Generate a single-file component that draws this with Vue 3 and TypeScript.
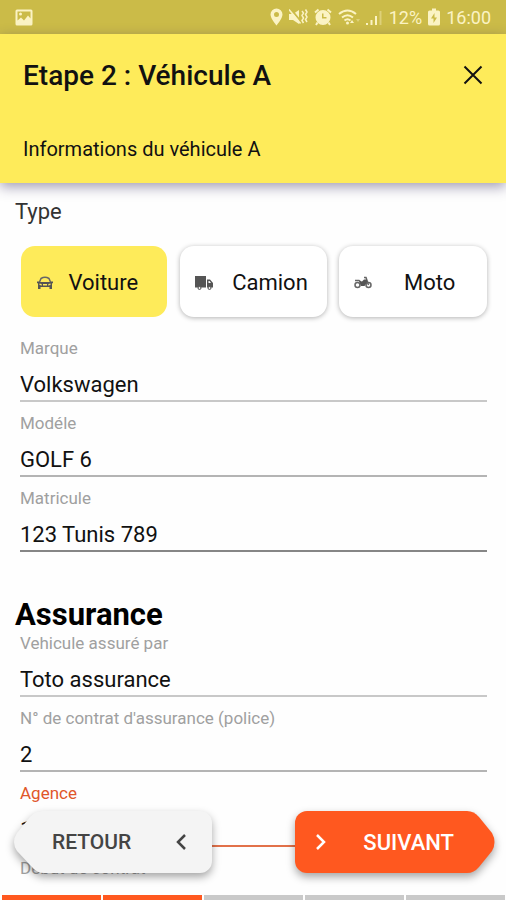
<script setup lang="ts">
import { ref } from 'vue'

interface Field {
  id: string
  label: string
  value: string
  tone: 'light' | 'mid' | 'dark' | 'active'
}

type Vehicle = 'Voiture' | 'Camion' | 'Moto'

const vehicles: Vehicle[] = ['Voiture', 'Camion', 'Moto']
const selected = ref<Vehicle>('Voiture')

const vehicleFields = ref<Field[]>([
  { id: 'marque', label: 'Marque', value: 'Volkswagen', tone: 'light' },
  { id: 'modele', label: 'Modéle', value: 'GOLF 6', tone: 'mid' },
  { id: 'matricule', label: 'Matricule', value: '123 Tunis 789', tone: 'dark' },
])

const insuranceFields = ref<Field[]>([
  { id: 'assureur', label: 'Vehicule assuré par', value: 'Toto assurance', tone: 'light' },
  { id: 'contrat', label: "N° de contrat d'assurance (police)", value: '2', tone: 'mid' },
  { id: 'agence', label: 'Agence', value: '1', tone: 'active' },
  { id: 'debut', label: 'Début de contrat', value: '', tone: 'light' },
])

const steps = 5
const currentStep = 2
</script>

<template>
  <div class="screen">
    <div class="status">
      <svg viewBox="0 0 18 17" width="18" height="17">
        <path fill-rule="evenodd" d="M2 .5h14A1.500 1.500 0 0 1 17.500 2v13a1.500 1.500 0 0 1-1.500 1.500H2A1.500 1.500 0 0 1 .5 15V2A1.500 1.500 0 0 1 2 .5zM2.500 2.500v9l3.500-3 3 3 4-5 2.500 3v-7z" />
        <circle cx="5.500" cy="5" r="1.500" />
      </svg>
      <div class="status-right">
        <svg viewBox="0 0 13 18" width="13" height="18">
          <path fill-rule="evenodd" d="M6.500 .5a6 6 0 0 0-6 6c0 4 6 11 6 11s6-7 6-11a6 6 0 0 0-6-6zm0 3.500a2.500 2.500 0 1 1 0 5 2.500 2.500 0 0 1 0-5z" />
        </svg>
        <svg viewBox="0 0 19 18" width="19" height="18">
          <path d="M0 6h4l6-4v14l-6-4H0z" />
          <path class="cut" d="M1 0l12 15" />
          <path class="line" d="M0 1.500l11.500 14M13 3l1.500 2-1.500 2.500 1.500 2.500-1.500 2.500 1.500 2.500M16.500 1.500l1.500 2.500-1.500 2.500 1.500 2.500-1.500 2.500 1.500 2.500" />
        </svg>
        <svg viewBox="0 0 18 18" width="18" height="18">
          <path class="thick" d="M1 4.500L4.500 1.500M17 4.500L13.500 1.500M3.500 14.500L2 17M14.500 14.500L16 17" />
          <path fill-rule="evenodd" d="M9 2a7.500 7.500 0 1 0 0 15A7.500 7.500 0 0 0 9 2zm-1 3.500h1.500V9h3v1.500H8z" />
        </svg>
        <svg viewBox="0 0 22 18" width="22" height="18">
          <path class="thick" d="M1 6Q9.500-1 18 6M4 9.500q5.500-4.500 11 0M6.500 12.500q3-2.500 6 0" />
          <circle cx="9.500" cy="15" r="1.500" />
          <path d="M14 12l2 3h-4z" />
          <path class="faint" d="M18 11h4l-2 3z" />
        </svg>
        <svg viewBox="0 0 17 18" width="17" height="18">
          <path d="M0 15h2v2H0zM4.500 12h2v5h-2zM9 8h2v9H9z" />
          <path class="faint" d="M13.500 3h2v14h-2z" />
        </svg>
        <span>12%</span>
        <svg viewBox="0 0 12 18" width="12" height="18">
          <path fill-rule="evenodd" d="M4 .5h4v2h2.500A1.500 1.500 0 0 1 12 4v12a1.500 1.500 0 0 1-1.500 1.500h-9A1.500 1.500 0 0 1 0 16V4a1.500 1.500 0 0 1 1.500-1.500H4zM6.500 5L3 10.500h2.500V15L9 9.500H6.500z" />
        </svg>
        <span>16:00</span>
      </div>
    </div>

    <header class="header">
      <div class="title-row">
        <h1>Etape 2 : Véhicule A</h1>
        <button class="close" type="button" aria-label="Fermer">
          <svg viewBox="0 0 20 20" width="20" height="20"><path d="M1.500 1.500l17 17M18.500 1.500l-17 17" /></svg>
        </button>
      </div>
      <p>Informations du véhicule A</p>
    </header>

    <main class="content">
      <h2 class="type-title">Type</h2>
      <div class="types">
        <button
          v-for="vehicle in vehicles"
          :key="vehicle"
          type="button"
          class="type"
          :class="{ selected: vehicle === selected }"
          :aria-pressed="vehicle === selected"
          @click="selected = vehicle"
        >
          <svg v-if="vehicle === 'Voiture'" viewBox="0 0 18 16" width="18" height="16">
            <path class="outline" d="M3.500 7L5 3.500Q9 1 13 3.500L14.500 7" />
            <path fill-rule="evenodd" d="M1 6.500h2L4 7h10l1-.5h2V8l-1 .5V14h-2.500v-2h-9v2H2V8.500L1 8zM3.500 8.500v1.500l2.500.5-.5-1.500zM14.500 8.500l-2 .5-.5 1.500 2.500-.5zM7 9v1.500h4V9z" />
          </svg>
          <svg v-else-if="vehicle === 'Camion'" viewBox="0 0 18 16" width="18" height="16">
            <path fill-rule="evenodd" d="M0 1h11v11.500H0zM12 4.500h3L18 8v4.500h-6zM13.500 6v2H16l-1.500-2z" />
            <circle class="wheel" cx="4.500" cy="13" r="1.500" />
            <circle class="wheel" cx="14.500" cy="13" r="1.500" />
          </svg>
          <svg v-else viewBox="0 0 18 16" width="18" height="16">
            <circle class="outline" cx="3.500" cy="10" r="2.500" />
            <circle class="outline" cx="14.500" cy="10" r="2.500" />
            <path class="outline" d="M10 2.500h2l2.500 7.500M1 5.500h4l2 1.500" />
            <path d="M5 6l3 .5 2-2h2.500l1 2-3 4.500H7z" />
          </svg>
          <span>{{ vehicle }}</span>
        </button>
      </div>

      <div class="fields">
        <div v-for="field in vehicleFields" :key="field.id" class="field" :class="field.tone">
          <label :for="field.id">{{ field.label }}</label>
          <input :id="field.id" v-model="field.value" type="text" />
        </div>
      </div>

      <h2 class="section-title">Assurance</h2>
      <div class="fields">
        <div v-for="field in insuranceFields" :key="field.id" class="field" :class="field.tone">
          <label :for="field.id">{{ field.label }}</label>
          <input :id="field.id" v-model="field.value" type="text" />
        </div>
      </div>
    </main>

    <footer class="footer">
      <nav class="actions">
        <button class="action back" type="button">
          <svg class="shape" viewBox="0 0 198 62" width="198" height="62">
            <path d="M30 0H186a12 12 0 0 1 12 12V50a12 12 0 0 1-12 12H30Q23 62 18 56L3 40Q-3 31 3 22L16 6Q21 0 30 0z" />
          </svg>
          <span>RETOUR</span>
          <svg class="chevron" viewBox="0 0 12 18" width="12" height="18"><path d="M10 2L3 9l7 7" /></svg>
        </button>
        <button class="action next" type="button">
          <svg class="shape" viewBox="0 0 200 62" width="200" height="62">
            <path d="M12 0H172Q179 0 184 6L197 22Q202 31 197 40L184 56Q179 62 172 62H12A12 12 0 0 1 0 50V12A12 12 0 0 1 12 0z" />
          </svg>
          <svg class="chevron" viewBox="0 0 12 18" width="12" height="18"><path d="M2 2l7 7-7 7" /></svg>
          <span>SUIVANT</span>
        </button>
      </nav>
      <div class="progress" role="progressbar" :aria-valuenow="currentStep" aria-valuemin="0" :aria-valuemax="steps">
        <i v-for="step in steps" :key="step" :class="{ done: step <= currentStep }"></i>
      </div>
    </footer>
  </div>
</template>

<style>
body {
  margin: 0;
  background: #fefefe;
}
</style>

<style scoped>
.screen {
  position: relative;
  display: flex;
  flex-direction: column;
  height: 100vh;
  overflow: hidden;
  background: #fefefe;
  color: #111;
  font-family: Roboto, "Liberation Sans", sans-serif;
}

h1,
h2,
p {
  margin: 0;
}

button {
  border: 0;
  padding: 0;
  background: none;
  color: inherit;
  font-family: inherit;
}

.status {
  display: flex;
  flex: none;
  align-items: center;
  justify-content: space-between;
  height: 34px;
  padding: 0 15px;
  background: #cbbb48;
  color: #fbf3c4;
  font-size: 18px;
}

.status svg {
  fill: #fbf3c4;
}

.status-right {
  display: flex;
  align-items: center;
  gap: 6px;
}

.status .line,
.status .thick,
.status .cut {
  fill: none;
  stroke: #fbf3c4;
  stroke-width: 1.5;
}

.status .thick {
  stroke-width: 2;
}

.status .cut {
  stroke: #cbbb48;
  stroke-width: 2;
}

.status .faint {
  opacity: 0.4;
}

.header {
  position: relative;
  z-index: 1;
  flex: none;
  padding: 24px 23px 22px;
  background: #feeb5a;
  box-shadow: 0 4px 12px rgba(50, 40, 90, 0.45);
}

.title-row {
  display: flex;
  align-items: center;
  justify-content: space-between;
  height: 34px;
}

h1 {
  font-size: 28px;
  font-weight: 500;
}

.close {
  display: flex;
}

.close path {
  fill: none;
  stroke: #111;
  stroke-width: 2;
}

.header p {
  margin-top: 45px;
  font-size: 20px;
  line-height: 24px;
}

.content {
  flex: 1;
  min-height: 0;
  overflow: hidden;
  padding: 15px 19px 0 15px;
}

.type-title {
  color: #333;
  font-size: 22px;
  font-weight: 400;
  line-height: 28px;
}

.types {
  display: grid;
  grid-template-columns: repeat(3, 1fr);
  gap: 12px;
  margin: 20px 0 0 5px;
}

.type {
  display: flex;
  align-items: center;
  height: 71px;
  padding: 2px 0 0 15px;
  border-radius: 14px;
  background: #fff;
  box-shadow: 0 1px 5px rgba(0, 0, 0, 0.3);
  font-size: 22px;
}

.type.selected {
  margin: 0 1px;
  padding-right: 14px;
  background: #feeb5a;
  box-shadow: none;
}

.type span {
  flex: 1;
  text-align: center;
}

.type svg {
  fill: #555;
}

.type .outline {
  fill: none;
  stroke: #666;
  stroke-width: 1.5;
}

.type .wheel {
  fill: #eee;
  stroke: #555;
}

.fields {
  display: flex;
  flex-direction: column;
  gap: 11px;
  margin-left: 5px;
}

.types + .fields {
  margin-top: 21px;
}

.field {
  display: flex;
  flex-direction: column;
}

.field label {
  color: #a0a0a0;
  font-size: 17px;
  line-height: 20px;
}

.field input {
  box-sizing: border-box;
  width: 100%;
  height: 44px;
  padding: 10px 0 0;
  border: 0;
  border-bottom: 2px solid #c8c8c8;
  border-radius: 0;
  outline: 0;
  background: none;
  color: #111;
  font-family: inherit;
  font-size: 22px;
}

.field.mid input {
  border-color: #b4b4b4;
}

.field.dark input {
  border-color: #868686;
}

.field.active input {
  border-color: #e2714a;
}

.field.active label {
  color: #e0562a;
}

.section-title {
  margin-top: 44px;
  color: #000;
  font-size: 31px;
  font-weight: 700;
  line-height: 37px;
}

.footer {
  position: absolute;
  right: 0;
  bottom: 0;
  left: 0;
}

.actions {
  display: flex;
  justify-content: space-between;
  padding: 0 11px 22px 14px;
}

.action {
  position: relative;
  display: flex;
  align-items: center;
  justify-content: space-between;
  box-sizing: border-box;
  height: 62px;
  font-size: 22px;
  font-weight: 500;
}

.action span,
.chevron {
  position: relative;
}

.shape {
  position: absolute;
  top: 0;
  left: 0;
  overflow: visible;
  filter: drop-shadow(0 4px 4px rgba(0, 0, 0, 0.35));
}

.chevron path {
  fill: none;
  stroke: currentColor;
  stroke-width: 2.5;
}

.back {
  width: 198px;
  padding: 0 25px 0 38px;
  color: #444;
  font-size: 21px;
}

.back .shape {
  fill: #f4f4f4;
}

.next {
  width: 200px;
  padding: 0 41px 0 20px;
  color: #fff;
}

.next .shape {
  fill: #ff581f;
}

.progress {
  display: grid;
  grid-template-columns: repeat(5, 1fr);
  gap: 2px;
  padding: 0 1px 0 2px;
}

.progress i {
  height: 5px;
  background: #c9c9c9;
}

.progress .done {
  background: #ff581f;
}
</style>
